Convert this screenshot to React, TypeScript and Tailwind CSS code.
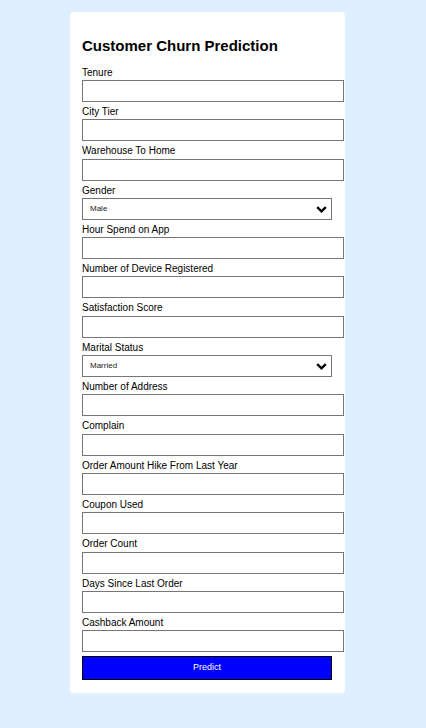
import React from 'react';

const fields: { label: string; type: 'input' | 'select'; options?: string[] }[] = [
  { label: 'Tenure', type: 'input' },
  { label: 'City Tier', type: 'input' },
  { label: 'Warehouse To Home', type: 'input' },
  { label: 'Gender', type: 'select', options: ['Male', 'Female'] },
  { label: 'Hour Spend on App', type: 'input' },
  { label: 'Number of Device Registered', type: 'input' },
  { label: 'Satisfaction Score', type: 'input' },
  { label: 'Marital Status', type: 'select', options: ['Married', 'Single', 'Divorced'] },
  { label: 'Number of Address', type: 'input' },
  { label: 'Complain', type: 'input' },
  { label: 'Order Amount Hike From Last Year', type: 'input' },
  { label: 'Coupon Used', type: 'input' },
  { label: 'Order Count', type: 'input' },
  { label: 'Days Since Last Order', type: 'input' },
  { label: 'Cashback Amount', type: 'input' },
];

function Chevron() {
  return (
    <svg width="11" height="7" viewBox="0 0 11 7" className="pointer-events-none absolute right-[5px] top-[8px]">
      <polyline points="1.2,1.2 5.5,5.3 9.8,1.2" fill="none" stroke="#000" strokeWidth="2.4" />
    </svg>
  );
}

export default function App() {
  return (
    <div className="min-h-[728px] bg-[#dfefff] pl-[70px] pt-[12px] font-['Liberation_Sans',Arial,sans-serif] text-black">
      <div className="w-[275px] rounded-[4px] bg-white px-[12px] pt-[24.7px] pb-[13px]">
        <h2 className="text-[15px] font-bold leading-[18px]">Customer Churn Prediction</h2>
        <form className="mt-[8px]" onSubmit={(e) => e.preventDefault()}>
          {fields.map((f) => (
            <div key={f.label}>
              <label className="block pt-[4px] pb-[1.3px] text-[10px] leading-[12px]">{f.label}</label>
              {f.type === 'input' ? (
                <input type="text" className="block h-[22px] w-[262px] border border-[#767676] bg-white px-[4px] text-[10px] outline-none" />
              ) : (
                <div className="relative w-[250px]">
                  <select className="block h-[22px] w-[250px] appearance-none border border-[#767676] bg-white pl-[7px] text-[8px] text-[#222] outline-none">
                    {f.options!.map((o) => (
                      <option key={o}>{o}</option>
                    ))}
                  </select>
                  <Chevron />
                </div>
              )}
            </div>
          ))}
          <button type="submit" className="mt-[3.7px] block h-[24px] w-[250px] border border-black bg-[#0000ff] text-[9px] text-white">
            Predict
          </button>
        </form>
      </div>
    </div>
  );
}
